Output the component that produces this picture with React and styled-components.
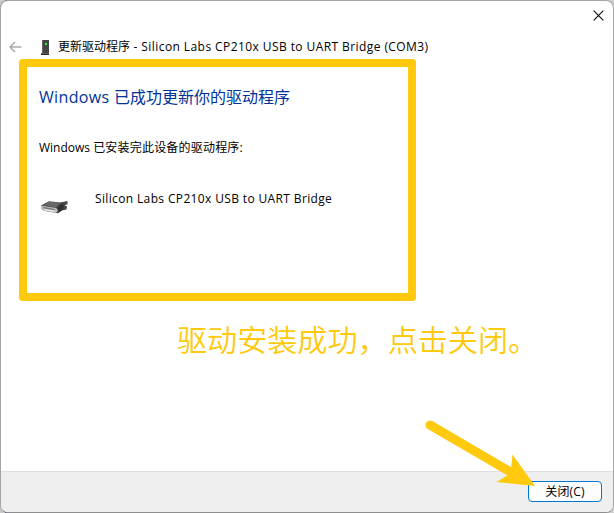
import React from "react";
import styled, { createGlobalStyle } from "styled-components";

const GlobalStyle = createGlobalStyle`
  html, body { margin: 0; padding: 0; overflow: hidden; }
  body { background: #cfcfcf; font-family: "Open Sans", "Noto Sans CJK SC", sans-serif; }
  * { box-sizing: border-box; }
`;

const Desktop = styled.div`
  width: 614px;
  height: 513px;
  background: linear-gradient(90deg, #c9c9c9 0 5px, #2020a8 5px 12px, #b9bce0 12px 17px, #cfcfcf 17px);
`;

const Dialog = styled.main`
  position: relative;
  display: flex;
  flex-direction: column;
  width: 614px;
  height: 513px;
  border: 1px solid #a5a5a5;
  border-bottom-color: #8e8e8e;
  border-radius: 8px;
  background: #fff;
  overflow: hidden;
  color: #000;
  font-size: 12px;
`;

const TitleBar = styled.header`
  display: flex;
  justify-content: flex-end;
  height: 31px;
  padding: 8px 8px 0 0;
`;

const IconButton = styled.button`
  display: flex;
  width: 13px;
  height: 13px;
  padding: 0;
  border: 0;
  background: none;
`;

const Heading = styled.div`
  display: flex;
  align-items: center;
  height: 30px;
  padding-left: 8px;
`;

const DeviceIcon = styled.svg`
  margin: 0 8px 0 18px;
`;

const Line = styled.div`
  display: flex;
  align-items: center;
  white-space: pre;
  height: 20px;
  line-height: 20px;
  font-size: ${(p) => p.$size || 12}px;
  letter-spacing: ${(p) => p.$track || 0}px;
  color: ${(p) => p.$color || "#000"};
`;

const Latin = styled.span`
  font-size: ${(p) => p.$size || 12}px;
  letter-spacing: ${(p) => p.$track || 0}px;
`;

const Body = styled.section`
  display: flex;
  flex: 1;
  flex-direction: column;
  padding: 25px 0 0 38px;
`;

const Status = styled.div`
  margin-top: 31px;
`;

const Device = styled.div`
  display: flex;
  margin-top: 31px;
  gap: 25px;
`;

const ConnectorIcon = styled.svg`
  margin: 11px 0 0 1px;
`;

const Footer = styled.footer`
  display: flex;
  justify-content: flex-end;
  height: 41px;
  padding: 9px 11px 0 0;
  border-top: 1px solid #dfdfdf;
  background: #efefef;
`;

const CloseButton = styled.button`
  display: flex;
  align-items: center;
  justify-content: center;
  width: 74px;
  height: 21px;
  padding: 0;
  border: 1px solid #0078d4;
  border-radius: 4px;
  background: #fdfdfd;
  color: #000;
  font: 12px/18px "Open Sans", "Noto Sans CJK SC", sans-serif;
  letter-spacing: 0.15px;
`;

const Highlight = styled.div`
  position: absolute;
  left: 18px;
  top: 58px;
  width: 397px;
  height: 242px;
  border: 8px solid #ffc90e;
  border-radius: 4px;
`;

const Note = styled.div`
  position: absolute;
  left: 176px;
  top: 315px;
  color: #ffc90e;
  font: 350 30.1px/44px "Noto Sans CJK SC", sans-serif;
  white-space: nowrap;
`;

const Arrow = styled.svg`
  position: absolute;
  left: 419px;
  top: 414px;
`;

export default function App() {
  return (
    <>
      <GlobalStyle />
      <Desktop>
        <Dialog>
          <TitleBar>
            <IconButton aria-label="关闭">
              <svg width="13" height="13" viewBox="0 0 13 13" fill="none" stroke="#111" strokeWidth="1.2">
                <path d="M1.7 1.7 11.3 11.3M11.3 1.7 1.7 11.3" />
              </svg>
            </IconButton>
          </TitleBar>
          <Heading>
            <IconButton aria-label="返回">
              <svg width="13" height="13" viewBox="0 0 13 13" fill="none" stroke="#aaa" strokeWidth="1.5">
                <path d="M12.5 6H1.2M6 1 1 6l5 5" />
              </svg>
            </IconButton>
            <DeviceIcon width="10" height="15" viewBox="0 0 10 15">
              <path d="M2 0h7v13H2z" fill="#444" />
              <path d="M2 0h1v13H2z" fill="#666" />
              <path d="M5 3h2v2H5z" fill="#38ef48" />
              <path d="M1 13.3h8V15H1z" fill="#292929" />
            </DeviceIcon>
            <Line>
              更新驱动程序<Latin $track={0.42}> - Silicon Labs CP210x USB to UART Bridge (COM3)</Latin>
            </Line>
          </Heading>
          <Body>
            <Line $size={16} $color="#003399">
              <Latin $size={16} $track={0.35}>Windows </Latin>已成功更新你的驱动程序
            </Line>
            <Status>
              <Line $track={0.2}>
                <Latin>Windows </Latin>已安装完此设备的驱动程序:
              </Line>
            </Status>
            <Device>
              <ConnectorIcon width="30" height="15" viewBox="0 0 30 15">
                <path d="M1 5.5 9 1.3 20 2.4 27.5 1v3.2L24.5 5.3 27 6.3 26.5 9.5 22 10.6 18 13.3 4 10.8 1 8.5z" fill="#484848" />
                <path d="M3 5 9 1.8 20 2.8 16 7.5z" fill="#686868" />
                <path d="M1 5.6 16 8l2.2 2.2L16 13 4 10.8 1 8.8z" fill="#bdbdbd" />
                <path d="m3 6.8 12 2.1v1.3L3.5 8.4z" fill="#7c7c7c" />
                <path d="m3 8.8 12 2-.4 1L5 10.2z" fill="#eee" />
                <path d="m17.5 8 4.5-4.5L24 6l-1 3.5-4.5 3z" fill="#303030" />
              </ConnectorIcon>
              <Line>
                <Latin $track={0.36}>Silicon Labs CP210x USB to UART Bridge</Latin>
              </Line>
            </Device>
          </Body>
          <Footer>
            <CloseButton>关闭(C)</CloseButton>
          </Footer>
          <Highlight />
          <Note>驱动安装成功，点击关闭。</Note>
          <Arrow width="120" height="80" viewBox="420 415 120 80">
            <path d="M430 425 509 471" stroke="#ffc90e" strokeWidth="9" strokeLinecap="round" />
            <path d="M512.5 454.5 535 486 496.5 482 508 475 511 469z" fill="#ffc90e" />
          </Arrow>
        </Dialog>
      </Desktop>
    </>
  );
}
